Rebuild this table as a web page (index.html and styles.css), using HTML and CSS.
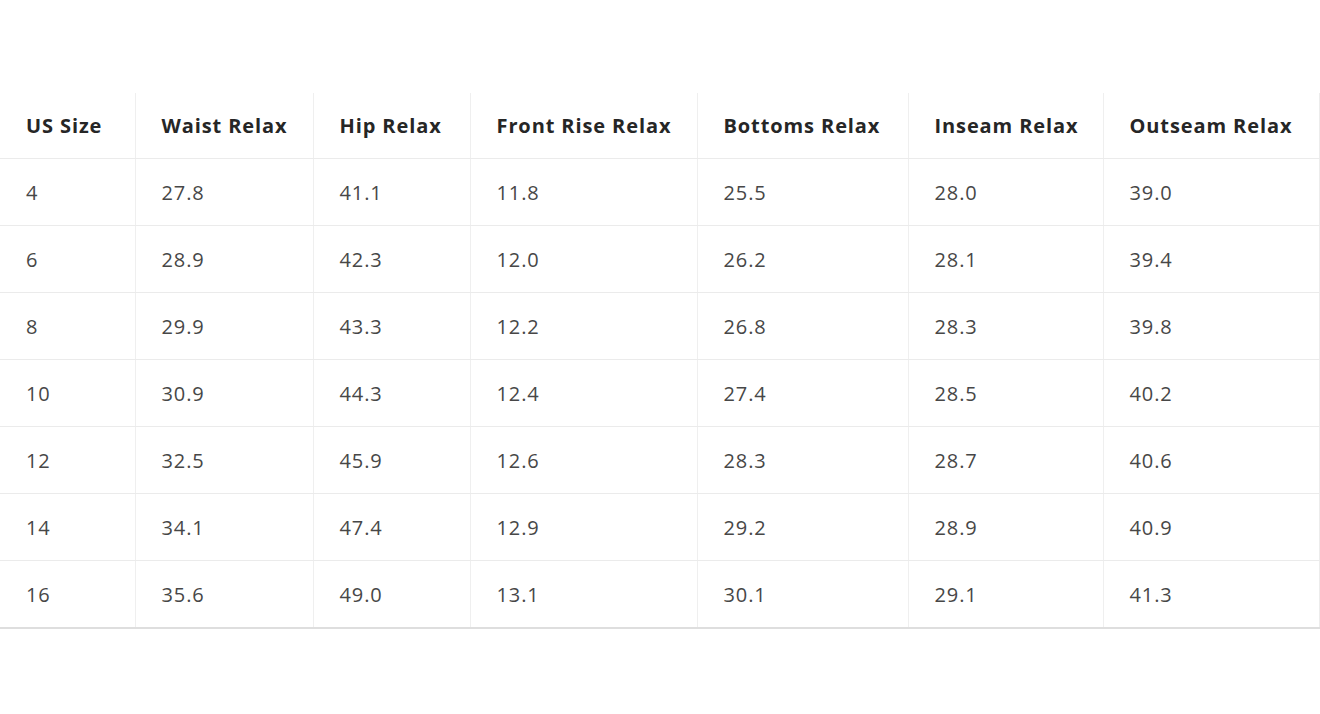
FILE: index.html
```html
<!DOCTYPE html>
<html lang="en">
<head>
<meta charset="utf-8">
<title>Size Chart</title>
<link rel="stylesheet" href="styles.css">
</head>
<body>
<div class="page">
<table class="chart">
<colgroup>
<col class="c1"><col class="c2"><col class="c3"><col class="c4"><col class="c5"><col class="c6"><col class="c7">
</colgroup>
<thead>
<tr><th>US Size</th><th>Waist Relax</th><th>Hip Relax</th><th>Front Rise Relax</th><th>Bottoms Relax</th><th>Inseam Relax</th><th>Outseam Relax</th></tr>
</thead>
<tbody>
<tr><td>4</td><td>27.8</td><td>41.1</td><td>11.8</td><td>25.5</td><td>28.0</td><td>39.0</td></tr>
<tr><td>6</td><td>28.9</td><td>42.3</td><td>12.0</td><td>26.2</td><td>28.1</td><td>39.4</td></tr>
<tr><td>8</td><td>29.9</td><td>43.3</td><td>12.2</td><td>26.8</td><td>28.3</td><td>39.8</td></tr>
<tr><td>10</td><td>30.9</td><td>44.3</td><td>12.4</td><td>27.4</td><td>28.5</td><td>40.2</td></tr>
<tr><td>12</td><td>32.5</td><td>45.9</td><td>12.6</td><td>28.3</td><td>28.7</td><td>40.6</td></tr>
<tr><td>14</td><td>34.1</td><td>47.4</td><td>12.9</td><td>29.2</td><td>28.9</td><td>40.9</td></tr>
<tr><td>16</td><td>35.6</td><td>49.0</td><td>13.1</td><td>30.1</td><td>29.1</td><td>41.3</td></tr>
</tbody>
</table>
</div>
</body>
</html>
```
FILE: styles.css
```css
html, body {
  margin: 0;
  padding: 0;
  background: #ffffff;
}
body {
  font-family: "Open Sans", "Noto Sans", "Liberation Sans", sans-serif;
  color: #3a3a3a;
}
.page {
  padding-top: 93px;
}
.chart {
  border-collapse: collapse;
  table-layout: fixed;
  width: 1319px;
}
.c1 { width: 135px; }
.c2 { width: 178px; }
.c3 { width: 157px; }
.c4 { width: 227px; }
.c5 { width: 211px; }
.c6 { width: 195px; }
.c7 { width: 216px; }
.chart th,
.chart td {
  text-align: left;
  padding: 0 0 0 26px;
  border-left: 1px solid #efefef;
  border-bottom: 1px solid #ebebeb;
  white-space: nowrap;
}
.chart th:first-child,
.chart td:first-child {
  border-left: none;
}
.chart th:last-child,
.chart td:last-child {
  border-right: 1px solid #ececec;
}
.chart th {
  height: 65px;
  font-size: 20px;
  font-weight: 700;
  color: #262626;
  letter-spacing: 0.9px;
}
.chart td {
  height: 66px;
  font-size: 20px;
  font-weight: 400;
  color: #474747;
  letter-spacing: 0.9px;
}
.chart tbody tr:last-child td {
  border-bottom: 2px solid #dedede;
}
```
